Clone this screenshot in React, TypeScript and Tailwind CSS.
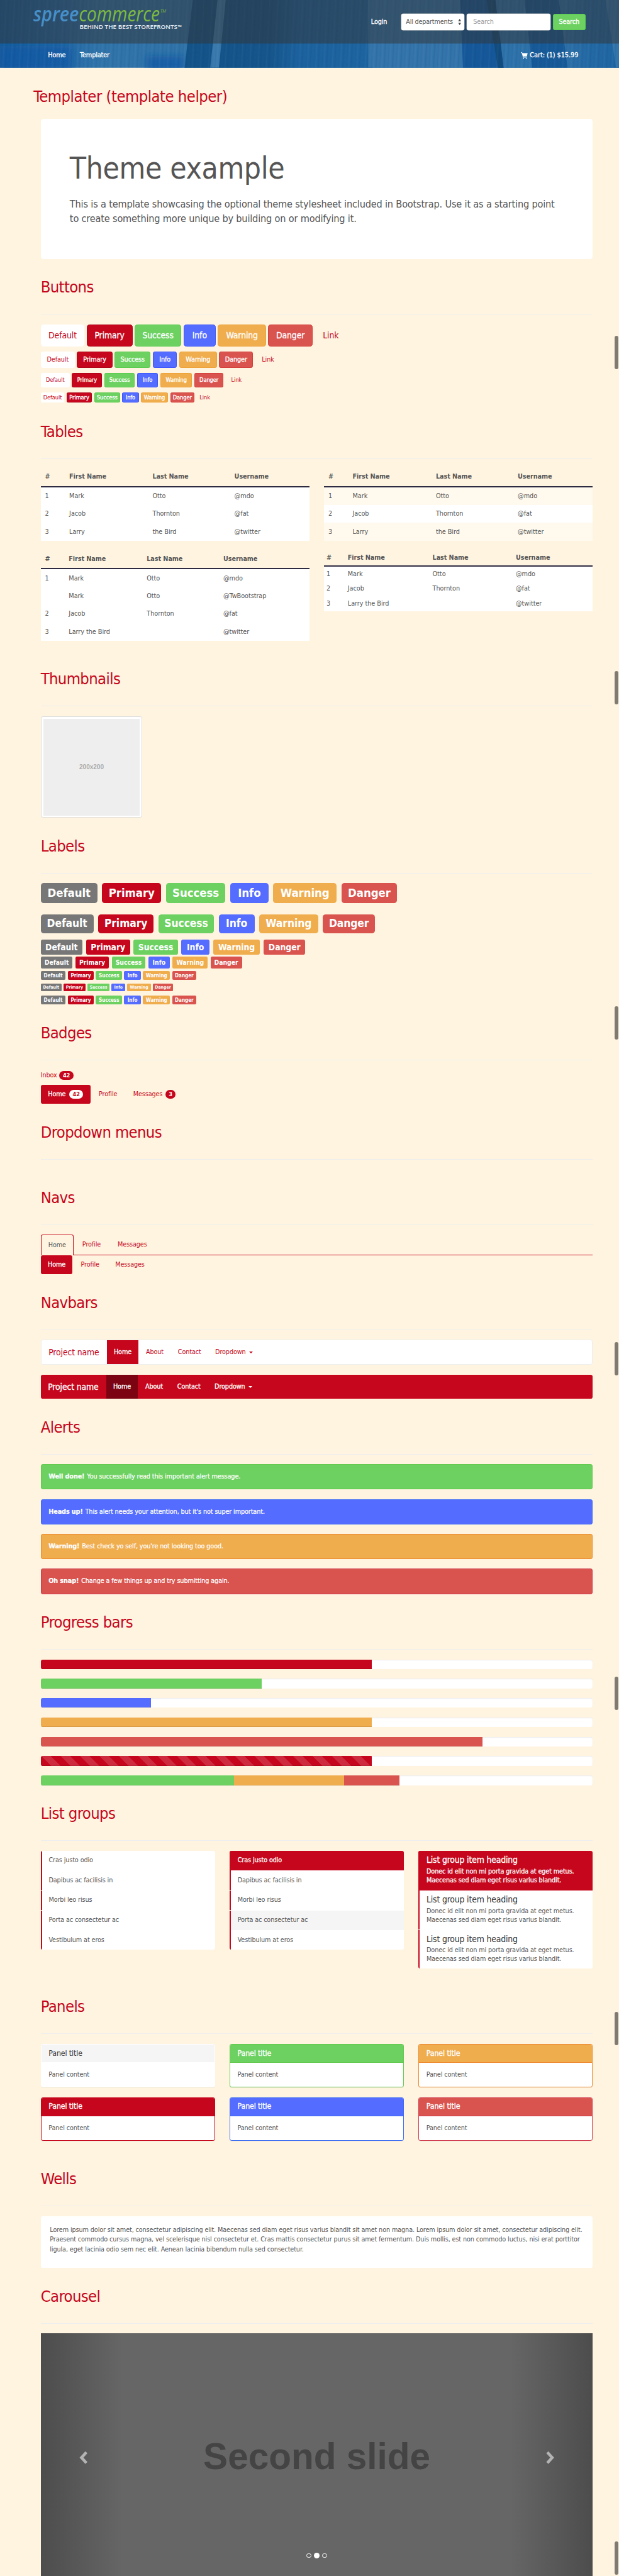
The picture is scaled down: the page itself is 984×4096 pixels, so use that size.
import React from 'react';

const NAMES = ['Default', 'Primary', 'Success', 'Info', 'Warning', 'Danger'];

const BUTTON_COLORS = [
  'bg-white border-white text-[#c6061c]',
  'bg-[#c6061c] border-[#ad0519] text-white [-webkit-text-stroke:0.4px]',
  'bg-[#6cd161] border-[#58cb4c] text-white [-webkit-text-stroke:0.4px]',
  'bg-[#546cff] border-[#3b56ff] text-white [-webkit-text-stroke:0.4px]',
  'bg-[#f0ad4e] border-[#eea236] text-white [-webkit-text-stroke:0.4px]',
  'bg-[#d9534f] border-[#d43f3a] text-white [-webkit-text-stroke:0.4px]',
  'border-transparent text-[#c6061c]',
];

const BUTTON_ROWS = [
  {
    row: 'h-[46px] text-[18px] gap-[4.5px]',
    item: 'rounded-[6px]',
    widths: ['w-[90.5px]', 'w-[94.5px]', 'w-[96.5px]', 'w-[66.5px]', 'w-[99.5px]', 'w-[91.5px]', 'w-[66px]'],
  },
  {
    row: 'h-[34px] mt-[10px] text-[14px] gap-[4.5px]',
    item: 'rounded-[4px]',
    widths: ['w-[70.5px]', 'w-[73px]', 'w-[74.5px]', 'w-[50px]', 'w-[78px]', 'w-[70px]', 'w-[53px]'],
  },
  {
    row: 'h-[30px] mt-[10px] text-[12px] gap-[4.5px]',
    item: 'rounded-[3px]',
    widths: ['w-[60px]', 'w-[62.5px]', 'w-[63px]', 'w-[43.7px]', 'w-[65.5px]', 'w-[60.5px]', 'w-[44px]'],
  },
  {
    row: 'h-[22px] mt-[10px] text-[12px] gap-[4.5px]',
    item: 'rounded-[3px]',
    widths: ['w-[49px]', 'w-[52.5px]', 'w-[53.5px]', 'w-[34px]', 'w-[56px]', 'w-[50px]', 'w-[34px]'],
  },
];

const LABEL_COLORS = ['bg-[#777777]', 'bg-[#c6061c]', 'bg-[#6cd161]', 'bg-[#546cff]', 'bg-[#f0ad4e]', 'bg-[#d9534f]'];

const SMALL_LABELS = ['w-[51.5px]', 'w-[54px]', 'w-[54px]', 'w-[34.5px]', 'w-[56px]', 'w-[50px]'];

const LABEL_ROWS = [
  {
    row: 'mt-px h-[41px] text-[24px] gap-[9.8px]',
    item: 'rounded-[6px]',
    widths: ['w-[117px]', 'w-[122px]', 'w-[123px]', 'w-[79px]', 'w-[131px]', 'w-[115px]'],
  },
  {
    row: 'mt-[24px] h-[39px] text-[22.5px] gap-[9.5px]',
    item: 'rounded-[6px]',
    widths: ['w-[109px]', 'w-[115px]', 'w-[115px]', 'w-[74px]', 'w-[122px]', 'w-[108px]'],
  },
  {
    row: 'mt-[13px] h-[31px] text-[18px] gap-[7.5px]',
    item: 'rounded-[4px]',
    widths: ['w-[86px]', 'w-[91px]', 'w-[91px]', 'w-[58px]', 'w-[97px]', 'w-[86px]'],
  },
  {
    row: 'mt-[4px] h-[24px] text-[13.5px] gap-[5.3px]',
    item: 'rounded-[3px]',
    widths: ['w-[66px]', 'w-[70px]', 'w-[70px]', 'w-[45px]', 'w-[73px]', 'w-[65px]'],
  },
  { row: 'mt-[6px] h-[18px] text-[10.5px] gap-[4.3px]', item: 'rounded-[2.5px]', widths: SMALL_LABELS },
  {
    row: 'mt-[7px] h-[16px] text-[9px] gap-[3.7px]',
    item: 'rounded-[2px]',
    widths: ['w-[43px]', 'w-[46px]', 'w-[46px]', 'w-[29px]', 'w-[49px]', 'w-[42px]'],
  },
  { row: 'mt-[9px] h-[18px] text-[10.5px] gap-[4.3px]', item: 'rounded-[2.5px]', widths: SMALL_LABELS },
];

function Section({ title, height, children }: { title: string; height: string; children?: React.ReactNode }) {
  return (
    <section className={height}>
      <div className="mb-5 h-[86px] border-b border-[#eeeeee] pt-[12px]">
        <h1 className="text-[33px] leading-[36px] tracking-[-0.8px] text-[#c6061c]">{title}</h1>
      </div>
      {children}
    </section>
  );
}

type TableProps = { cols: string; head: string; row: string; pad: string; rows: string[][]; striped?: boolean };

function Table({ cols, head, row, pad, rows, striped }: TableProps) {
  return (
    <div className="tracking-[-0.05px]">
      <div className={`grid items-center border-b-[3px] border-[#2d2b42] font-bold tracking-[-0.1px] ${cols} ${head} ${pad}`}>
        {['#', 'First Name', 'Last Name', 'Username'].map((h) => (
          <span key={h}>{h}</span>
        ))}
      </div>
      {rows.map((cells, i) => (
        <div key={i} className={`grid items-center ${cols} ${row} ${pad} ${striped && i % 2 === 0 ? 'bg-[#fff9ee]' : 'bg-white'}`}>
          {cells.map((c, j) => (
            <span key={j}>{c}</span>
          ))}
        </div>
      ))}
    </div>
  );
}

const PEOPLE = [
  ['1', 'Mark', 'Otto', '@mdo'],
  ['2', 'Jacob', 'Thornton', '@fat'],
  ['3', 'Larry', 'the Bird', '@twitter'],
];

function HeaderBackdrop() {
  return (
    <svg className="absolute inset-0 h-full w-full" viewBox="0 0 1278 140" preserveAspectRatio="none">
      <defs>
        <linearGradient id="base" x1="0" x2="1" y1="0" y2="0">
          <stop offset="0" stopColor="#175c9b" />
          <stop offset="0.1" stopColor="#2469a6" />
          <stop offset="0.16" stopColor="#3074aa" />
          <stop offset="0.3" stopColor="#3073a8" />
        </linearGradient>
        <linearGradient id="mid" x1="0" x2="1" y1="0" y2="0">
          <stop offset="0" stopColor="#135388" />
          <stop offset="0.45" stopColor="#15558b" />
          <stop offset="0.6" stopColor="#1c629e" />
          <stop offset="1" stopColor="#1d65a0" />
        </linearGradient>
        <linearGradient id="end" x1="0" x2="1" y1="0" y2="0">
          <stop offset="0" stopColor="#3173a9" />
          <stop offset="0.5" stopColor="#2369a4" />
          <stop offset="1" stopColor="#1f66a2" />
        </linearGradient>
        <pattern id="grain" width="17" height="140" patternUnits="userSpaceOnUse" patternTransform="skewX(-3)">
          <rect x="0" width="3" height="140" fill="#0b3f78" opacity="0.1" />
          <rect x="8" width="2" height="140" fill="#0b3f78" opacity="0.08" />
          <rect x="12" width="2" height="140" fill="#ffffff" opacity="0.03" />
        </pattern>
        <filter id="soft" x="-20%" y="-50%" width="140%" height="200%">
          <feGaussianBlur stdDeviation="7" />
        </filter>
      </defs>
      <rect width="1278" height="140" fill="url(#base)" />
      <g filter="url(#soft)" fill="#165aa6">
        <rect x="0" y="95" width="150" height="50" opacity="0.75" />
        <rect x="302" y="116" width="78" height="30" opacity="0.75" />
      </g>
      <polygon points="398,0 770,0 770,140 381,140" fill="url(#mid)" />
      <polygon points="449,0 466,0 452,140 434,140" fill="#3a7aad" />
      <polygon points="760,0 950,0 956,140 760,140" fill="#3374aa" />
      <polygon points="950,0 1023,0 1040,140 956,140" fill="#15589a" />
      <polygon points="1005,0 1023,0 1040,140 1028,140" fill="#124c7e" />
      <polygon points="1023,0 1083,0 1099,140 1040,140" fill="#2e72aa" />
      <polygon points="1083,0 1154,0 1172,140 1099,140" fill="#175a98" />
      <polygon points="1154,0 1278,0 1278,140 1172,140" fill="url(#end)" />
      <polygon points="1250,0 1278,0 1278,140 1272,140" fill="#3475aa" />
      <rect width="1278" height="140" fill="url(#grain)" />
      <rect width="1278" height="90" fill="#333333" opacity="0.5" />
    </svg>
  );
}

function Logo() {
  return (
    <svg className="h-[90px] w-[320px]" viewBox="0 0 320 90">
      <g fontFamily="'Open Sans', 'Noto Sans', sans-serif" letterSpacing="0">
        <g fontStyle="italic">
          <text x="0" y="44" fontSize="43" fontWeight="600" fill="#468fc8" textLength="94" lengthAdjust="spacingAndGlyphs">spree</text>
          <text x="94" y="44" fontSize="43" fill="#7dba3f" textLength="167" lengthAdjust="spacingAndGlyphs">commerce</text>
          <text x="262" y="26.500" fontSize="9" fill="#7dba3f" textLength="12" lengthAdjust="spacingAndGlyphs">TM</text>
        </g>
        <text x="95.500" y="60" fontSize="11.800" fontWeight="600" fill="#e4ebf1" textLength="202" lengthAdjust="spacingAndGlyphs">BEHIND THE BEST STOREFRONTS</text>
        <text x="298" y="55.500" fontSize="5.500" fontWeight="700" fill="#e4ebf1" textLength="8" lengthAdjust="spacingAndGlyphs">TM</text>
      </g>
    </svg>
  );
}

function CartIcon() {
  return (
    <svg className="h-[14px] w-[14px]" viewBox="0 0 14 14" fill="currentColor">
      <path d="M0 .4h2.700l.5 1.600H14l-1.700 6.800H5.100l.3 1.200h6.900v1.100H4.500L1.900 1.500H0z" />
      <circle cx="5.600" cy="12.600" r="1.100" />
      <circle cx="11.200" cy="12.600" r="1.100" />
    </svg>
  );
}

function Header() {
  return (
    <header className="relative h-[140px] text-white">
      <HeaderBackdrop />
      <div className="relative flex h-[90px] items-center px-[69px]">
        <Logo />
        <span className="ml-auto w-[63px] [-webkit-text-stroke:0.4px]">Login</span>
        <div className="flex h-[34px]">
          <div className="flex w-[130px] items-center justify-between rounded-[4px] bg-white pl-[9px] pr-[6px] tracking-[-0.24px] text-[#555555] shadow-[0_0_0_0.5px_#cccccc]">
            <span className="whitespace-nowrap">All departments</span>
            <svg className="h-[13px] w-[7px]" viewBox="0 0 7 13" fill="#444444">
              <path d="M3.500 0 6.500 5H.5zM3.500 13 6.500 8H.5z" />
            </svg>
          </div>
          <div className="ml-[5px] flex w-[173px] items-center rounded-[4px] bg-white pl-[13px] text-[#999999] shadow-[0_0_0_0.5px_#cccccc]">Search</div>
          <div className="ml-[4px] flex w-[68px] items-center justify-center rounded-[4px] border border-[#58cb4c] bg-[#6cd161] [-webkit-text-stroke:0.4px]">Search</div>
        </div>
      </div>
      <nav className="relative flex h-[50px] items-center pl-[99px] pr-[84px] [-webkit-text-stroke:0.4px]">
        <span className="w-[66px]">Home</span>
        <span>Templater</span>
        <span className="ml-auto flex items-center gap-[4px] tracking-[-0.04px]">
          <CartIcon />
          Cart: (1) $15.99
        </span>
      </nav>
    </header>
  );
}

const ALERTS = [
  { title: 'Well done!', text: 'You successfully read this important alert message.', color: 'bg-[#6cd161] border-[#62cb4e]' },
  { title: 'Heads up!', text: "This alert needs your attention, but it's not super important.", color: 'bg-[#546cff] border-[#3b6cf5]' },
  { title: 'Warning!', text: "Best check yo self, you're not looking too good.", color: 'bg-[#f0ad4e] border-[#ee8a2f]' },
  { title: 'Oh snap!', text: 'Change a few things up and try submitting again.', color: 'bg-[#d9534f] border-[#d03b4e]' },
];

const STRIPES =
  'bg-[linear-gradient(45deg,rgba(255,255,255,0.15)_25%,transparent_25%,transparent_50%,rgba(255,255,255,0.15)_50%,rgba(255,255,255,0.15)_75%,transparent_75%,transparent)] bg-[length:40px_40px]';

const BARS = [
  ['w-[60%] bg-[#c6061c]'],
  ['w-[40%] bg-[#6cd161]'],
  ['w-[20%] bg-[#546cff]'],
  ['w-[60%] bg-[#f0ad4e]'],
  ['w-[80%] bg-[#d9534f]'],
  [`w-[60%] bg-[#c6061c] ${STRIPES}`],
  ['w-[35%] bg-[#6cd161]', 'w-[20%] bg-[#f0ad4e]', 'w-[10%] bg-[#d9534f]'],
];

const ITEMS = ['Cras justo odio', 'Dapibus ac facilisis in', 'Morbi leo risus', 'Porta ac consectetur ac', 'Vestibulum at eros'];

const PANELS = [
  { box: 'border-white', head: 'bg-[#f5f5f5] border-white text-[#333333]' },
  { box: 'border-[#62cb4e]', head: 'bg-[#6cd161] border-[#62cb4e] text-white [-webkit-text-stroke:0.4px]' },
  { box: 'border-[#ee8a2f]', head: 'bg-[#f0ad4e] border-[#ee8a2f] text-white [-webkit-text-stroke:0.4px]' },
  { box: 'border-[#c6061c]', head: 'bg-[#c6061c] border-[#c6061c] text-white [-webkit-text-stroke:0.4px]' },
  { box: 'border-[#3b6cf5]', head: 'bg-[#546cff] border-[#3b6cf5] text-white [-webkit-text-stroke:0.4px]' },
  { box: 'border-[#d03b4e]', head: 'bg-[#d9534f] border-[#d03b4e] text-white [-webkit-text-stroke:0.4px]' },
];

const THUMBS = ['top-[694px]', 'top-[1386px]', 'top-[2078px]', 'top-[2771px]', 'top-[3463px]', 'top-[4155px]', 'top-[5248px]'];

function NavbarItems({ active }: { active: string }) {
  return (
    <>
      <span className={`flex h-full w-[66px] items-center justify-center ${active}`}>Home</span>
      <span className="w-[66px] pl-[15px]">About</span>
      <span className="w-[77px] pl-[15px]">Contact</span>
      <span className="flex items-center gap-[7px] pl-[15px]">
        Dropdown
        <i className="border-x-[4px] border-t-[4px] border-x-transparent border-t-current" />
      </span>
    </>
  );
}

function Chevron({ d }: { d: string }) {
  return (
    <svg className="h-[28px] w-[20px]" viewBox="0 0 20 28" fill="none" stroke="#b3b3b3" strokeWidth="6">
      <path d={d} />
    </svg>
  );
}

export default function App() {
  return (
    <div className="relative h-[5320px] w-[1278px] overflow-hidden bg-[#fff4e0] font-['DejaVu_Sans_Condensed','DejaVu_Sans',sans-serif] text-[14px] tracking-[-0.15px] text-[#555555] [zoom:0.76995]">
      <Header />
      <h1 className="mt-[38px] pl-[69px] text-[33px] leading-[44px] tracking-[-0.65px] text-[#c6061c]">Templater (template helper)</h1>
      <main className="ml-[84px] mt-[23px] w-[1140px]">
        <div className="mb-[29px] h-[290px] rounded-[6px] bg-white px-[60px] pt-[68px]">
          <h1 className="text-[62px] leading-[70px] tracking-[-0.5px]">Theme example</h1>
          <p className="mt-[24px] whitespace-nowrap text-[21px] leading-[30px] tracking-[-0.23px]">
            This is a template showcasing the optional theme stylesheet included in Bootstrap. Use it as a starting point
            <br />
            to create something more unique by building on or modifying it.
          </p>
        </div>

        <Section title="Buttons" height="h-[298px]">
          {BUTTON_ROWS.map((r, i) => (
            <div key={i} className={`flex tracking-[-0.12px] ${r.row}`}>
              {[...NAMES, 'Link'].map((n, j) => (
                <span key={n} className={`flex items-center justify-center border ${r.item} ${r.widths[j]} ${BUTTON_COLORS[j]}`}>{n}</span>
              ))}
            </div>
          ))}
        </Section>

        <Section title="Tables" height="h-[511px]">
          <div className="-mt-px grid grid-cols-2 items-start gap-x-[30px] gap-y-5">
            <Table cols="grid-cols-[50px_172px_169px_1fr]" head="h-[39px]" row="h-[37px]" pad="pl-[9px]" rows={PEOPLE} />
            <Table cols="grid-cols-[50px_172px_169px_1fr]" head="h-[39px]" row="h-[37px]" pad="pl-[9px]" rows={PEOPLE} striped />
            <Table
              cols="grid-cols-[49px_161px_158px_1fr]"
              head="h-[39px]"
              row="h-[37px]"
              pad="pl-[9px]"
              rows={[['1', 'Mark', 'Otto', '@mdo'], ['', 'Mark', 'Otto', '@TwBootstrap'], ['2', 'Jacob', 'Thornton', '@fat'], ['3', 'Larry the Bird', '', '@twitter']]}
            />
            <Table
              cols="grid-cols-[44px_175px_172px_1fr]"
              head="h-[33px]"
              row="h-[31px]"
              pad="pl-[5px]"
              rows={[['1', 'Mark', 'Otto', '@mdo'], ['2', 'Jacob', 'Thornton', '@fat'], ['3', 'Larry the Bird', '', '@twitter']]}
            />
          </div>
        </Section>

        <Section title="Thumbnails" height="h-[345px]">
          <div className="h-[210px] w-[210px] rounded-[4px] border border-[#dddddd] bg-white p-[4px]">
            <div className="flex h-[200px] items-center justify-center bg-[#eeeeee] font-['Liberation_Sans',sans-serif] text-[13px] font-bold tracking-normal text-[#aaaaaa]">200x200</div>
          </div>
        </Section>

        <Section title="Labels" height="h-[386px]">
          {LABEL_ROWS.map((r, i) => (
            <div key={i} className={`flex font-bold tracking-[-0.004em] text-white ${r.row}`}>
              {NAMES.map((n, j) => (
                <span key={n} className={`flex items-center justify-center ${r.item} ${r.widths[j]} ${LABEL_COLORS[j]}`}>{n}</span>
              ))}
            </div>
          ))}
        </Section>

        <Section title="Badges" height="h-[205px]">
          <div className="flex h-[20px] items-center gap-[5px] pt-[2px] text-[#c6061c]">
            Inbox
            <span className="flex h-[18px] w-[29px] items-center justify-center rounded-full bg-[#c6061c] text-[12px] font-bold text-white">42</span>
          </div>
          <div className="mt-[10px] flex h-[40px] items-center text-[#c6061c]">
            <span className="flex h-full w-[103px] items-center justify-between rounded-[4px] bg-[#c6061c] px-[15px] text-white [-webkit-text-stroke:0.4px]">
              Home
              <span className="flex h-[18px] w-[29px] items-center justify-center rounded-full bg-white text-[12px] font-bold text-[#c6061c] [-webkit-text-stroke:0]">42</span>
            </span>
            <span className="w-[71px] pl-[17px]">Profile</span>
            <span className="flex w-[105px] items-center justify-between pl-[17px]">
              Messages
              <span className="flex h-[18px] w-[22px] items-center justify-center rounded-full bg-[#c6061c] text-[12px] font-bold text-white">3</span>
            </span>
          </div>
        </Section>

        <Section title="Dropdown menus" height="h-[135px]" />

        <Section title="Navs" height="h-[217px]">
          <div className="flex h-[42px] text-[#c6061c]">
            <span className="flex w-[68px] items-center justify-center rounded-t-[4px] border border-b-0 border-[#c6061c] text-[#555555]">Home</span>
            <div className="flex flex-1 items-center border-b border-[#c6061c]">
              <span className="w-[73px] pl-[18px]">Profile</span>
              <span className="pl-[18px]">Messages</span>
            </div>
          </div>
          <div className="flex h-[40px] items-center text-[#c6061c]">
            <span className="flex h-full w-[66px] items-center justify-center rounded-[4px] bg-[#c6061c] text-white [-webkit-text-stroke:0.4px]">Home</span>
            <span className="w-[71px] pl-[17px]">Profile</span>
            <span className="pl-[17px]">Messages</span>
          </div>
        </Section>

        <Section title="Navbars" height="h-[257px]">
          <div className="flex h-[52px] items-center rounded-[4px] border border-[#eeeeee] bg-white text-[#c6061c]">
            <span className="w-[135px] pl-[15px] text-[18px]">Project name</span>
            <NavbarItems active="bg-[#c6061c] text-white [-webkit-text-stroke:0.4px]" />
          </div>
          <div className="mt-[20px] flex h-[50px] items-center overflow-hidden rounded-[4px] bg-[#c6061c] text-white [-webkit-text-stroke:0.4px]">
            <span className="w-[135px] pl-[15px] text-[18px]">Project name</span>
            <NavbarItems active="bg-[#7c0412]" />
          </div>
        </Section>

        <Section title="Alerts" height="h-[403px]">
          <div className="flex flex-col gap-5">
            {ALERTS.map((a) => (
              <div key={a.title} className={`flex h-[52px] items-center gap-[5px] rounded-[4px] border pl-[15px] text-white [-webkit-text-stroke:0.3px] ${a.color}`}>
                <strong>{a.title}</strong>
                <span>{a.text}</span>
              </div>
            ))}
          </div>
        </Section>

        <Section title="Progress bars" height="h-[395px]">
          <div className="flex flex-col gap-5">
            {BARS.map((parts, i) => (
              <div key={i} className="flex h-[20px] overflow-hidden rounded-[4px] bg-white shadow-[inset_0_1px_2px_rgba(0,0,0,0.1)]">
                {parts.map((p) => (
                  <div key={p} className={`shadow-[inset_0_-1px_0_rgba(0,0,0,0.15)] ${p}`} />
                ))}
              </div>
            ))}
          </div>
        </Section>

        <Section title="List groups" height="h-[399px]">
          <div className="grid grid-cols-3 items-start gap-[30px]">
            {['', 'active'].map((mode) => (
              <div key={mode} className="overflow-hidden rounded-[4px] bg-white">
                {ITEMS.map((t, i) => (
                  <div
                    key={t}
                    className={`mb-px flex h-[40.2px] items-center border-l-[2.6px] border-[#c6061c] pl-[14px] last:mb-0 ${
                      mode && i === 0 ? 'bg-[#c6061c] text-white [-webkit-text-stroke:0.4px]' : ''
                    } ${mode && i === 3 ? 'bg-[#f5f5f5]' : ''}`}
                  >
                    {t}
                  </div>
                ))}
              </div>
            ))}
            <div className="overflow-hidden rounded-[4px] bg-white">
              {[0, 1, 2].map((i) => (
                <div
                  key={i}
                  className={`border-l-[2.6px] border-[#c6061c] pl-[14px] pt-[11px] ${
                    i === 0 ? 'h-[82px] bg-[#c6061c] text-white [-webkit-text-stroke:0.4px]' : i === 1 ? 'mb-px h-[80px]' : 'h-[81px]'
                  }`}
                >
                  <h4 className={`mb-[5px] text-[18px] leading-[18px] tracking-[-0.2px] ${i === 0 ? '' : 'text-[#333333]'}`}>List group item heading</h4>
                  <p className="leading-[18px]">
                    Donec id elit non mi porta gravida at eget metus.
                    <br />
                    Maecenas sed diam eget risus varius blandit.
                  </p>
                </div>
              ))}
            </div>
          </div>
        </Section>

        <Section title="Panels" height="h-[355px]">
          <div className="grid grid-cols-3 gap-x-[30px] gap-y-5">
            {PANELS.map((p) => (
              <div key={p.box} className={`h-[90px] overflow-hidden rounded-[4px] border bg-white shadow-[0_1px_1px_rgba(0,0,0,0.05)] ${p.box}`}>
                <div className={`flex h-[38px] items-center border-b pl-[15px] text-[16px] ${p.head}`}>Panel title</div>
                <div className="flex h-[50px] items-center pl-[15px]">Panel content</div>
              </div>
            ))}
          </div>
        </Section>

        <Section title="Wells" height="h-[243px]">
          <div className="mt-[21px] h-[107px] whitespace-nowrap rounded-[4px] bg-white px-[19px] pt-[18px] leading-[20px]">
            Lorem ipsum dolor sit amet, consectetur adipiscing elit. Maecenas sed diam eget risus varius blandit sit amet non magna. Lorem ipsum dolor sit amet, consectetur adipiscing elit.
            <br />
            Praesent commodo cursus magna, vel scelerisque nisl consectetur et. Cras mattis consectetur purus sit amet fermentum. Duis mollis, est non commodo luctus, nisi erat porttitor
            <br />
            ligula, eget lacinia odio sem nec elit. Aenean lacinia bibendum nulla sed consectetur.
          </div>
        </Section>

        <Section title="Carousel" height="h-[607px]">
          <div className="relative h-[501px] bg-[#666666]">
            <div className="pt-[209px] text-center font-['Liberation_Sans',sans-serif] text-[76px] font-bold leading-[90px] tracking-normal text-[#444444]">Second slide</div>
            <div className="absolute inset-y-0 left-0 flex w-[171px] items-start bg-linear-to-r from-black/25 to-transparent pl-[78px] pt-[242px]">
              <Chevron d="M16 3 6 14l10 11" />
            </div>
            <div className="absolute inset-y-0 right-0 flex w-[171px] items-start justify-end bg-linear-to-l from-black/25 to-transparent pr-[78px] pt-[242px]">
              <Chevron d="M4 3l10 11L4 25" />
            </div>
            <div className="absolute inset-x-0 top-[453px] flex items-center justify-center gap-[5px]">
              <i className="h-[10px] w-[10px] rounded-full border border-white" />
              <i className="h-[12px] w-[12px] rounded-full bg-white" />
              <i className="h-[10px] w-[10px] rounded-full border border-white" />
            </div>
          </div>
        </Section>
      </main>
      {THUMBS.map((t) => (
        <div key={t} className={`absolute left-[1269px] h-[69px] w-[8px] rounded-full bg-[#807b70] ${t}`} />
      ))}
    </div>
  );
}
